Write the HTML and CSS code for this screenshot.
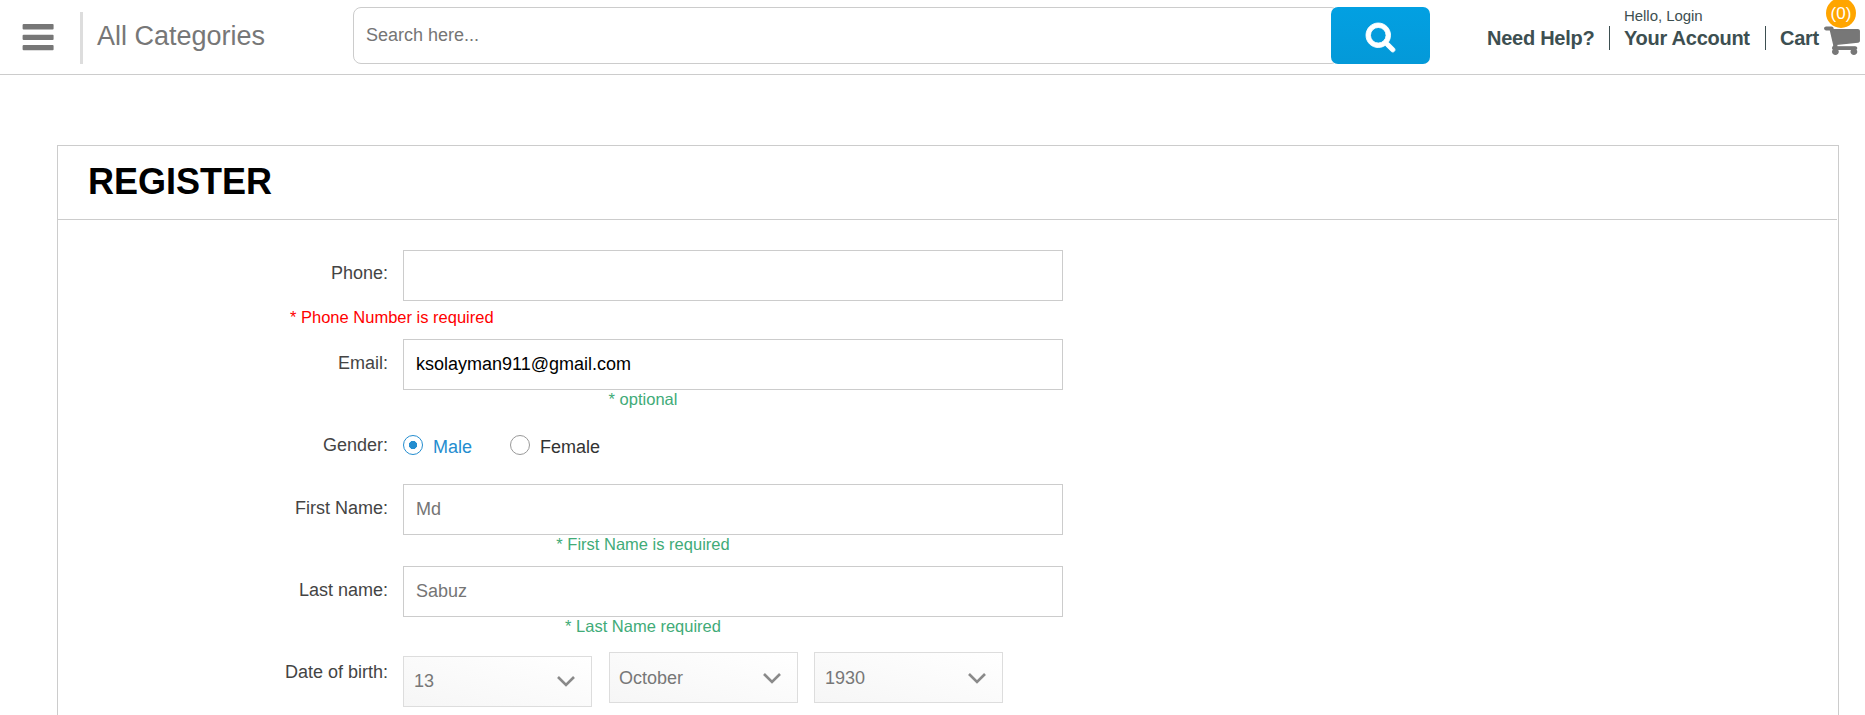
FILE: index.html
```html
<!DOCTYPE html>
<html lang="en">
<head>
<meta charset="utf-8">
<title>Register</title>
<link rel="stylesheet" href="styles.css">
</head>
<body>
<header class="topbar">
  <svg class="menu-icon" viewBox="0 0 32 27" width="32" height="27"><g fill="#777"><rect x=".6" y="0" width="31" height="5.400" rx="1"/><rect x=".6" y="10.700" width="31" height="5.400" rx="1"/><rect x=".6" y="21" width="31" height="5.200" rx="1"/></g></svg>
  <div class="divider"></div>
  <div class="categories">All Categories</div>
  <div class="search">
    <input class="search-input" type="text" placeholder="Search here...">
    <button class="search-button" aria-label="Search">
      <svg viewBox="0 0 1664 1664" width="29" height="29"><path fill="#fff" stroke="#fff" stroke-width="50" d="M1152 704q0-185-131.500-316.500t-316.500-131.500-316.500 131.500-131.500 316.500 131.500 316.500 316.500 131.500 316.500-131.500 131.500-316.500zm512 832q0 52-38 90t-90 38q-54 0-90-38l-343-342q-179 124-399 124-143 0-273.500-55.500t-225-150-150-225-55.500-273.500 55.500-273.500 150-225 225-150 273.500-55.500 273.500 55.500 225 150 150 225 55.500 273.500q0 220-124 399l343 343q37 37 37 90z"/></svg>
    </button>
  </div>
  <nav class="links">
    <a class="link help">Need Help?</a>
    <span class="bar"></span>
    <a class="link account"><span class="hello">Hello, Login</span>Your Account</a>
    <span class="bar"></span>
    <a class="link cart">Cart</a>
    <span class="cart-icon">
      <svg viewBox="-40 -40 1744 1616" width="36" height="31" preserveAspectRatio="none"><path fill="#777" stroke="#777" stroke-width="75" d="M640 1408q0 52-38 90t-90 38-90-38-38-90 38-90 90-38 90 38 38 90zm896 0q0 52-38 90t-90 38-90-38-38-90 38-90 90-38 90 38 38 90zm128-1088v512q0 24-16.500 42.500t-40.500 21.500l-1044 122q13 60 13 70 0 16-24 64h920q26 0 45 19t19 45-19 45-45 19h-1024q-26 0-45-19t-19-45q0-11 8-31.500t16-36 21.500-40 15.500-29.500l-177-823h-204q-26 0-45-19t-19-45 19-45 45-19h256q16 0 28.500 6.500t19.500 15.500 13 24.500 8 26 5.500 29.500 4.500 26h1201q26 0 45 19t19 45z"/></svg>
      <span class="badge">(0)</span>
    </span>
  </nav>
</header>
<main class="card">
  <h1 class="title">REGISTER</h1>
  <form class="form">
    <div class="row phone-row"><label class="label">Phone:</label><input class="field" type="text"></div>
    <div class="error">* Phone Number is required</div>
    <div class="row"><label class="label">Email:</label><input class="field" type="text" value="ksolayman911@gmail.com"></div>
    <div class="hint">* optional</div>
    <div class="row gender-row">
      <span class="label">Gender:</span>
      <div class="radios">
        <span class="radio checked"><i class="dot"></i><span class="radio-text">Male</span></span>
        <span class="radio"><i class="dot"></i><span class="radio-text">Female</span></span>
      </div>
    </div>
    <div class="row"><label class="label">First Name:</label><input class="field" type="text" placeholder="Md"></div>
    <div class="hint name-hint">* First Name is required</div>
    <div class="row"><label class="label">Last name:</label><input class="field" type="text" placeholder="Sabuz"></div>
    <div class="hint last-hint">* Last Name required</div>
    <div class="row birth-row">
      <span class="label">Date of birth:</span>
      <div class="selects">
        <div class="select day">13<svg class="chevron" viewBox="0 0 18 11" width="18" height="11"><path d="M1 1L9 9L17 1" fill="none" stroke="#8a8a8a" stroke-width="2.600"/></svg></div>
        <div class="select month">October<svg class="chevron" viewBox="0 0 18 11" width="18" height="11"><path d="M1 1L9 9L17 1" fill="none" stroke="#8a8a8a" stroke-width="2.600"/></svg></div>
        <div class="select year">1930<svg class="chevron" viewBox="0 0 18 11" width="18" height="11"><path d="M1 1L9 9L17 1" fill="none" stroke="#8a8a8a" stroke-width="2.600"/></svg></div>
      </div>
    </div>
  </form>
</main>
</body>
</html>
```
FILE: styles.css
```css
* { box-sizing: border-box; }
body {
  margin: 0;
  background: #fff;
  color: #444;
  font: 18px "Liberation Sans", Arial, sans-serif;
}
.topbar {
  display: flex;
  align-items: flex-start;
  height: 75px;
  border-bottom: 1px solid #ccc;
  padding-left: 22px;
}
.menu-icon { margin-top: 24px; flex: none; }
.divider { width: 3px; height: 52px; margin: 12px 0 0 26px; background: #ddd; }
.categories {
  width: 256px;
  margin-left: 14px;
  padding-top: 1px;
  font-size: 27px;
  line-height: 70px;
  color: #777;
}
.search { display: flex; width: 1077px; height: 57px; margin-top: 7px; }
.search-input {
  flex: 1;
  min-width: 0;
  margin-right: -8px;
  padding: 0 12px;
  border: 1px solid #ccc;
  border-radius: 8px;
  font: inherit;
  outline: 0;
}
.search-input::placeholder, .field::placeholder { color: #757575; opacity: 1; }
.search-button {
  position: relative;
  display: flex;
  align-items: center;
  justify-content: center;
  width: 99px;
  padding: 3px 0 0;
  border: 0;
  border-radius: 7px;
  background: linear-gradient(#02a0e2, #0499d8);
}
.search-button svg { overflow: visible; }
.links {
  display: flex;
  flex: 1;
  margin-left: 57px;
  font-size: 20px;
  font-weight: bold;
}
.link { position: relative; line-height: 24px; padding-top: 26px; white-space: nowrap; color: #3d4f51; letter-spacing: -0.26px; }
.help { width: 122px; }
.bar { width: 1px; height: 24px; margin-top: 26px; background: #3d4f51; }
.account { width: 141px; margin-left: 14px; }
.hello { position: absolute; left: 0; top: 7px; font-size: 15px; font-weight: normal; line-height: 18px; letter-spacing: -0.05px; }
.cart { width: 44px; margin-left: 14px; }
.cart-icon { position: relative; width: 36px; padding-top: 24px; line-height: 0; }
.badge {
  position: absolute;
  left: 2px;
  top: -2px;
  width: 30px;
  height: 30px;
  border-radius: 50%;
  background: orange;
  color: #fff;
  font-size: 17px;
  font-weight: normal;
  line-height: 31px;
  text-align: center;
}
.card {
  width: 1782px;
  height: 570px;
  margin: 70px 0 0 57px;
  border: 1px solid #ccc;
  border-bottom: 0;
}
.title {
  height: 74px;
  margin: 0 1px 0 0;
  padding: 1px 0 0 30px;
  border-bottom: 1px solid #ccc;
  color: #000;
  font-size: 36px;
  line-height: 70px;
}
.form { padding-top: 30px; }
.row { display: flex; gap: 15px; height: 51px; }
.label { width: 330px; text-align: right; line-height: 48px; }
.phone-row .label { line-height: 46px; }
.field {
  width: 660px;
  height: 51px;
  padding: 0 12px;
  border: 1px solid #ccc;
  font: inherit;
  color: #000;
  outline: 0;
}
.error { height: 38px; padding-left: 232px; font-size: 16.5px; line-height: 32px; color: #f00; }
.hint { width: 1170px; height: 19px; font-size: 16.5px; line-height: 19px; text-align: center; color: #41ab78; }
.name-hint { margin-bottom: 12px; }
.last-hint { margin-bottom: 16px; }
.gender-row { height: 75px; }
.gender-row .label { line-height: 72px; }
.radios { display: flex; padding-top: 26px; }
.radio { display: flex; width: 107px; color: #333; }
.radio-text { padding-left: 10px; line-height: 24px; }
.dot { width: 20px; height: 20px; border: 1px solid #999; border-radius: 50%; background: #fff; }
.checked { color: #248dcf; }
.checked .dot { border-color: #248dcf; background: radial-gradient(circle, #248dcf 3.800px, #fff 4.400px); }
.birth-row { height: 55px; }
.birth-row .label { line-height: 40px; }
.selects { display: flex; gap: 17px; align-items: flex-start; }
.select {
  display: flex;
  align-items: center;
  justify-content: space-between;
  width: 189px;
  height: 51px;
  padding: 0 16px 0 10px;
  border: 1px solid #ddd;
  background: linear-gradient(15deg, #f6f6f6, #fff);
  color: #777;
}
.day { margin-top: 4px; }
.month { padding: 1px 16px 0 9px; }
.year { margin-left: -1px; padding-top: 1px; }
```
